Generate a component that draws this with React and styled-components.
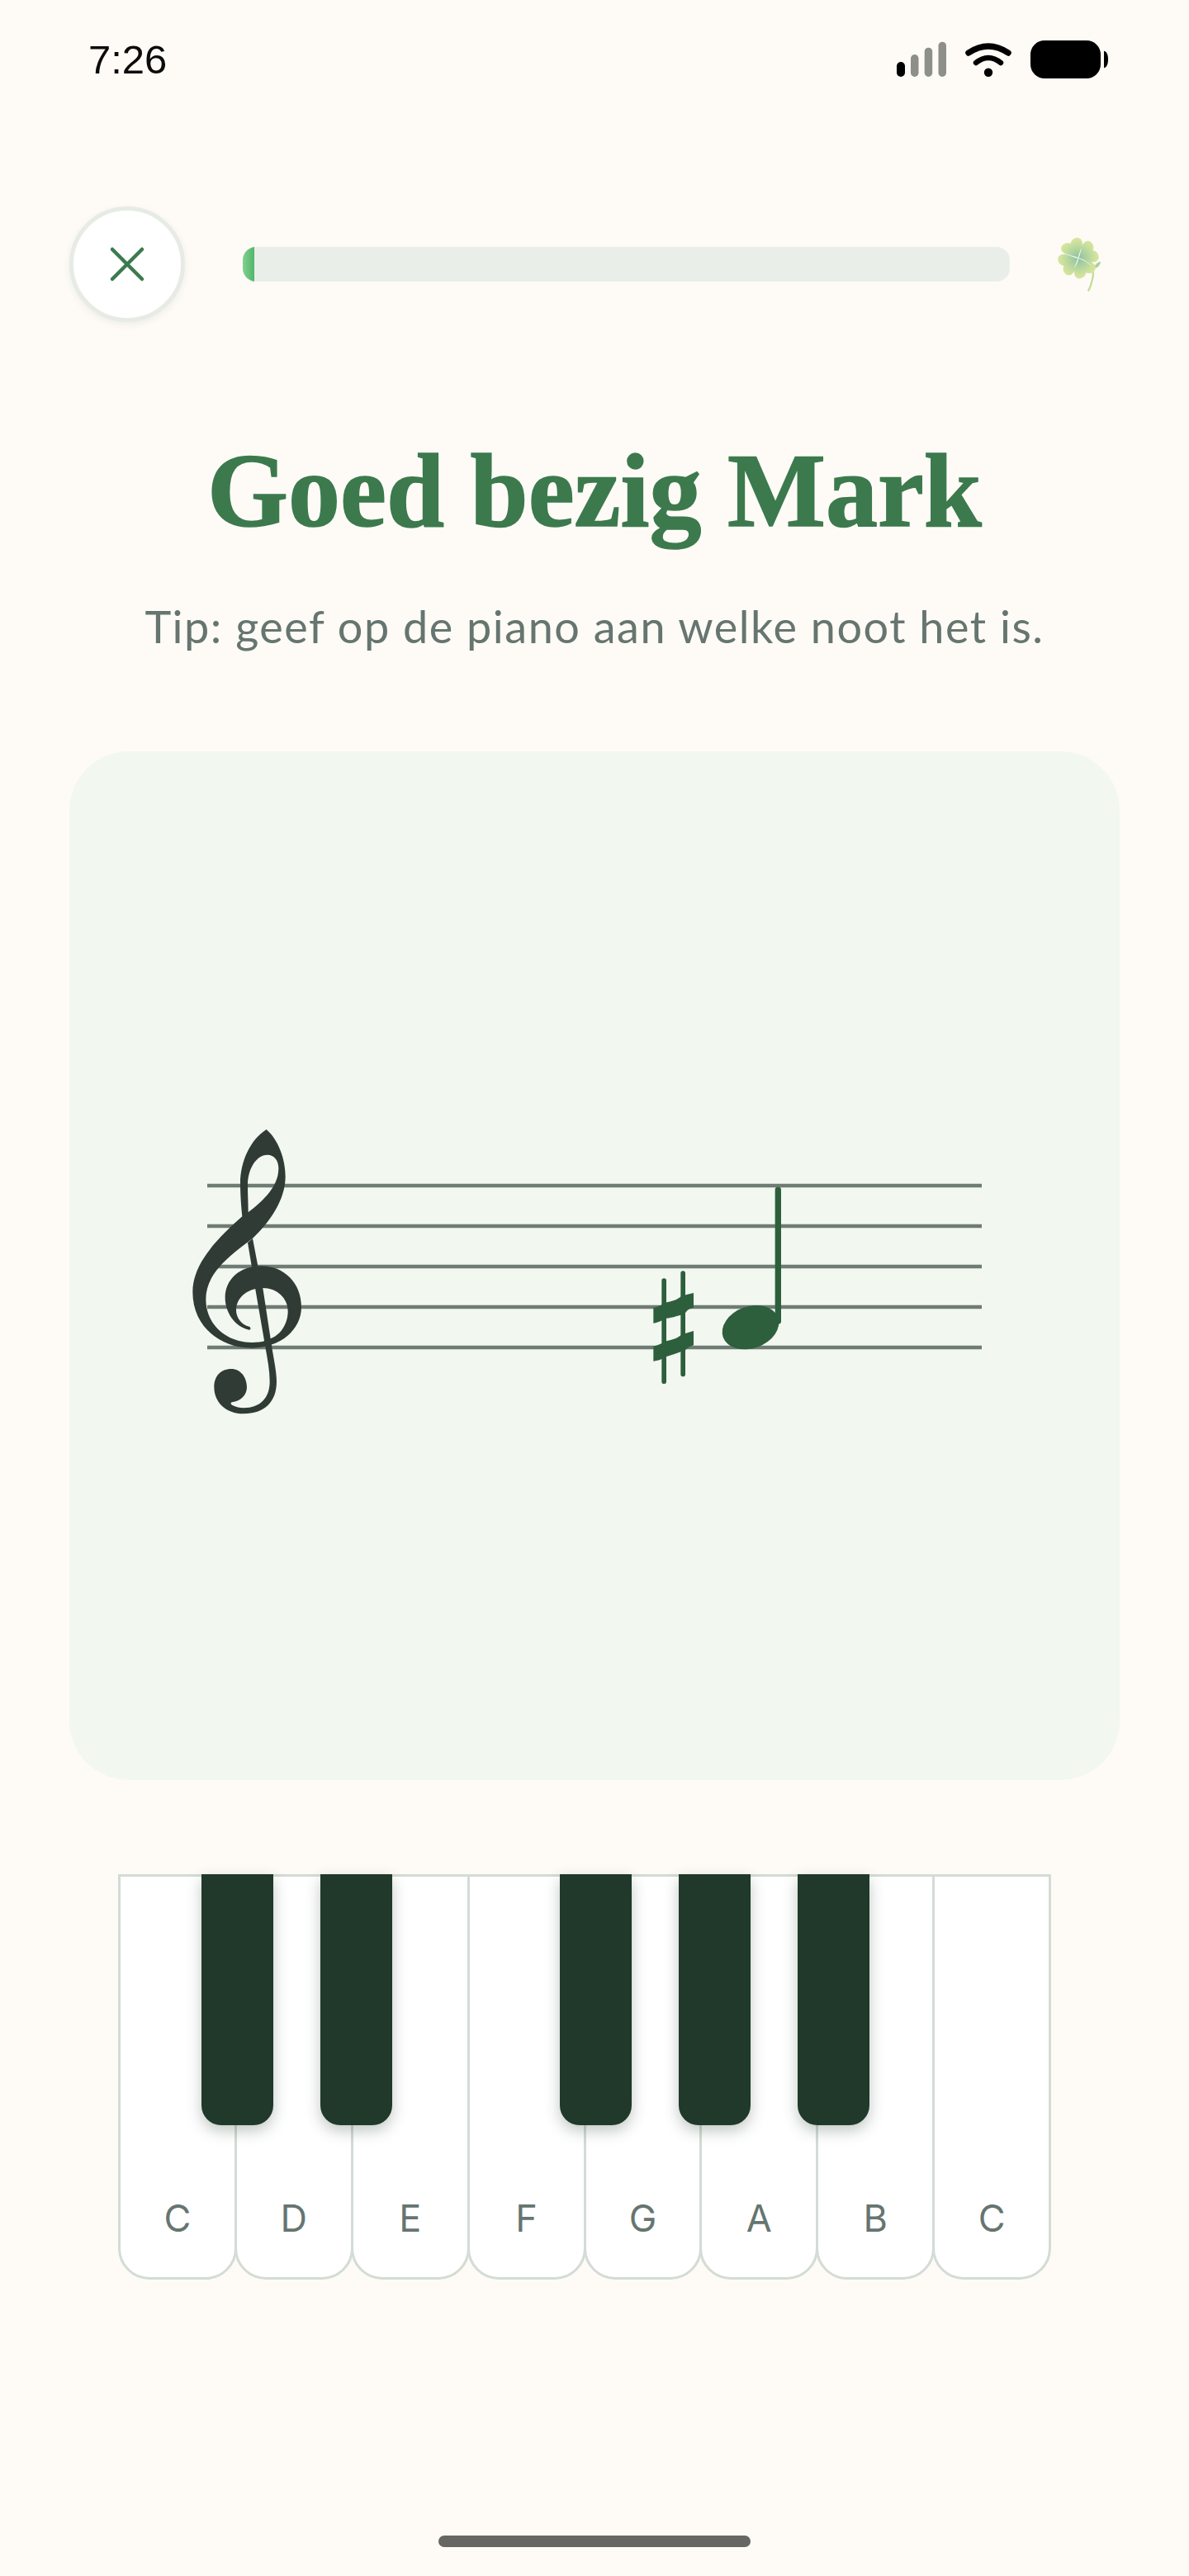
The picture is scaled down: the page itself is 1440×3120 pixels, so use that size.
import React from "react";
import styled, { createGlobalStyle } from "styled-components";

const Global = createGlobalStyle`
  html, body { margin: 0; padding: 0; background: #fefbf6; }
`;

const Page = styled.div`
  width: 1440px;
  height: 3120px;
  background: #fefbf6;
  display: flex;
  flex-direction: column;
  overflow: hidden;
`;

const StatusBar = styled.div`
  height: 144px;
  padding: 0 98px 0 107px;
  display: flex;
  align-items: center;
  justify-content: space-between;
  flex: none;
`;

const Clock = styled.span`
  font: 400 49px/1 "Liberation Sans", Arial, sans-serif;
  color: #0b0b0b;
`;

const StatusIcons = styled.div`
  display: flex;
  align-items: center;
  gap: 21px;
  svg { display: block; }
`;

const Header = styled.div`
  margin-top: 106px;
  padding-left: 84px;
  display: flex;
  align-items: center;
  flex: none;
`;

const CloseButton = styled.button`
  width: 140px;
  height: 140px;
  box-sizing: border-box;
  border-radius: 50%;
  border: 5px solid #e7ebe5;
  background: #fff;
  box-shadow: 0 3px 8px rgba(40, 60, 45, 0.07);
  padding: 0;
  display: flex;
  align-items: center;
  justify-content: center;
  flex: none;
`;

const Track = styled.div`
  width: 929px;
  height: 42px;
  margin-left: 70px;
  border-radius: 16px;
  background: #e9efe8;
  overflow: hidden;
  flex: none;
`;

const Fill = styled.div`
  height: 100%;
  background: linear-gradient(90deg, #83d08f, #52b56b);
`;

const CloverWrap = styled.div`
  width: 100px;
  height: 90px;
  margin: -10px 0 0 27px;
  flex: none;
  svg { display: block; }
`;

const Title = styled.h1`
  margin: 130px 0 0;
  text-align: center;
  font: 700 126px/150px "Liberation Serif", "Times New Roman", serif;
  color: #3c7a4e;
  -webkit-text-stroke: 1.5px #3c7a4e;
`;

const Subtitle = styled.p`
  margin: 54px 0 0;
  text-align: center;
  font: 400 54px/70px Lato, "Noto Sans", sans-serif;
  letter-spacing: 1.5px;
  color: #667570;
`;

const Card = styled.div`
  width: 1272px;
  height: 1246px;
  margin: 116px 0 0 84px;
  border-radius: 72px;
  background: #f2f7f0;
  flex: none;
  svg { display: block; }
`;

const Piano = styled.div`
  position: relative;
  width: 1130px;
  height: 491px;
  margin: 114px 0 0 143px;
  display: flex;
  flex: none;
`;

const WhiteKey = styled.div`
  flex: 1;
  box-sizing: border-box;
  margin-left: ${(p) => (p.$first ? 0 : -3)}px;
  background: #fff;
  border: 3px solid #d3dcd5;
  border-radius: 0 0 38px 38px;
  display: flex;
  align-items: flex-end;
  justify-content: center;
  padding-bottom: 43px;
  font: 400 45px/56px Inter, "Liberation Sans", sans-serif;
  color: #667570;
`;

const BlackKey = styled.div`
  position: absolute;
  top: 0;
  left: ${(p) => p.$left}px;
  width: 87px;
  height: 304px;
  border-radius: 0 0 24px 24px;
  background: #20392a;
  box-shadow: 0 7px 18px rgba(32, 57, 42, 0.28);
`;

const HomeBar = styled.div`
  width: 378px;
  height: 14px;
  border-radius: 7px;
  background: #666662;
  margin: auto auto 35px;
  flex: none;
`;

const SignalIcon = () => (
  <svg width="60" height="46" viewBox="0 0 60 46">
    <rect x="0" y="26" width="10" height="18" rx="5" fill="#000" />
    <rect x="17" y="17" width="9.5" height="27" rx="4.7" fill="#8f8f8a" />
    <rect x="33.7" y="8.7" width="9.5" height="35.3" rx="4.7" fill="#8f8f8a" />
    <rect x="50.5" y="1.7" width="9.5" height="42.3" rx="4.7" fill="#8f8f8a" />
  </svg>
);

const WifiIcon = () => (
  <svg width="60" height="46" viewBox="0 0 60 46">
    <path d="M6 15Q30 -1 54 15" fill="none" stroke="#000" strokeWidth="7.5" strokeLinecap="round" />
    <path d="M15 27Q30 15 45 27" fill="none" stroke="#000" strokeWidth="6.5" strokeLinecap="round" />
    <circle cx="30" cy="38.7" r="5.2" fill="#000" />
  </svg>
);

const BatteryIcon = () => (
  <svg width="94" height="46" viewBox="0 0 94 46">
    <rect x="0" y="0" width="85" height="46" rx="17" fill="#000" />
    <path d="M89 12.7c3 .5 5 4 5 10.3s-2 9.800-5 10.300z" fill="#000" />
  </svg>
);

const CloseIcon = () => (
  <svg width="48" height="48" viewBox="0 0 48 48">
    <path d="M6 6L42 42M42 6L6 42" fill="none" stroke="#3c7a4e" strokeWidth="4.500" strokeLinecap="round" />
  </svg>
);

const LEAF = "M0 0C-6 -14 -38 -26 -41 -50C-43 -70 -14 -78 0 -60C14 -78 43 -70 41 -50C38 -26 6 -14 0 0Z";

const Clover = () => (
  <svg width="100" height="90" viewBox="0 0 300 270">
    <defs>
      <radialGradient id="cl" gradientUnits="userSpaceOnUse" cx="0" cy="0" r="72">
        <stop offset="0" stopColor="#8cc0a0" />
        <stop offset="0.45" stopColor="#b0d4a0" />
        <stop offset="0.85" stopColor="#cfe29c" />
        <stop offset="1" stopColor="#d5e59d" />
      </radialGradient>
    </defs>
    <path d="M175 132C210 145 228 170 220 200C216 218 212 232 205 245" fill="none" stroke="#c2dd9c" strokeWidth="7" strokeLinecap="round" />
    <path d="M226 165C226 152 236 143 249 140C248 153 240 163 226 165Z" fill="#a9d39a" />
    <g transform="translate(168 128)">
      {[-28, 62, 152, 242].map((r) => (
        <path key={r} d={LEAF} transform={`rotate(${r})`} fill="url(#cl)" />
      ))}
    </g>
    <path d="M100 108C130 115 150 122 168 128C190 136 205 145 215 155M178 95L168 128L155 160" fill="none" stroke="#fefbf6" strokeWidth="2" />
  </svg>
);

const CLEF =
  "M428 84C470 120 497 190 497 255C497 340 440 420 380 478L358 495C270 560 208 620 208 700C208 800 290 858 375 858C395 858 410 856 420 853L445 843C480 830 506 790 506 745C506 695 465 660 415 660C360 660 318 695 318 740C318 770 340 795 365 800C372 802 372 812 365 812C310 800 278 745 278 695C278 630 330 580 410 580C490 580 555 640 555 730C555 810 480 878 375 878C260 878 160 800 160 675C160 570 250 480 340 400C335 350 333 310 333 280C333 200 370 120 428 84ZM362 385C420 340 472 290 472 225C472 195 455 176 432 176C390 176 360 230 360 285C360 320 362 350 362 385Z";

const CLEF_TAIL =
  "M360 495L378 480L397 580L415 660L447 870C455 920 465 965 465 1000C465 1075 420 1117 345 1117C280 1117 238 1075 238 1020C238 980 262 954 300 954C335 954 357 985 357 1020C357 1050 335 1070 303 1075C295 1078 300 1084 306 1087C318 1093 330 1096 345 1096C405 1096 440 1060 440 1000C440 960 432 920 425 880L388 665L375 585Z";

const SHARP_BARS =
  "M154 552C175 548 190 538 203 532C225 528 245 520 255 510C270 505 285 502 300 498V552C285 555 275 560 268 575C250 578 225 588 200 590C190 595 175 605 154 608ZM154 692C175 688 190 678 203 672C225 668 245 660 255 650C270 645 285 640 300 636V688C285 692 275 700 268 708C250 712 225 722 200 730C190 735 175 745 154 746Z";

const Music = () => (
  <svg width="1272" height="1246" viewBox="84 910 1272 1246">
    <g stroke="#6f7c73" strokeWidth="4.500">
      {[1436, 1485, 1534, 1583, 1632].map((y) => (
        <line key={y} x1="251" x2="1189" y1={y} y2={y} />
      ))}
    </g>
    <g transform="translate(180 1340) scale(0.33333)" fill="#303b35">
      <path d={CLEF} fillRule="evenodd" />
      <path d={CLEF_TAIL} />
    </g>
    <g transform="translate(740 1400) scale(0.33333)" fill="#2d5f3c">
      <path d={SHARP_BARS} />
      <rect x="184" y="445" width="17" height="383" rx="8.500" />
      <rect x="253" y="418" width="17" height="384" rx="8.500" />
      <rect x="596" y="113" width="22" height="498" rx="10" />
      <ellipse cx="507" cy="623" rx="106" ry="76" transform="rotate(-20 507 623)" />
    </g>
  </svg>
);

const WHITE = ["C", "D", "E", "F", "G", "A", "B", "C"];
const BLACK = [101, 245, 535, 679, 823];

export default function App() {
  return (
    <Page>
      <Global />
      <StatusBar>
        <Clock>7:26</Clock>
        <StatusIcons>
          <SignalIcon />
          <WifiIcon />
          <BatteryIcon />
        </StatusIcons>
      </StatusBar>
      <Header>
        <CloseButton aria-label="Sluiten">
          <CloseIcon />
        </CloseButton>
        <Track>
          <Fill style={{ width: "1.5%" }} />
        </Track>
        <CloverWrap>
          <Clover />
        </CloverWrap>
      </Header>
      <Title>Goed bezig Mark</Title>
      <Subtitle>Tip: geef op de piano aan welke noot het is.</Subtitle>
      <Card>
        <Music />
      </Card>
      <Piano>
        {WHITE.map((n, i) => (
          <WhiteKey key={i} $first={i === 0}>
            {n}
          </WhiteKey>
        ))}
        {BLACK.map((l) => (
          <BlackKey key={l} $left={l} />
        ))}
      </Piano>
      <HomeBar />
    </Page>
  );
}
